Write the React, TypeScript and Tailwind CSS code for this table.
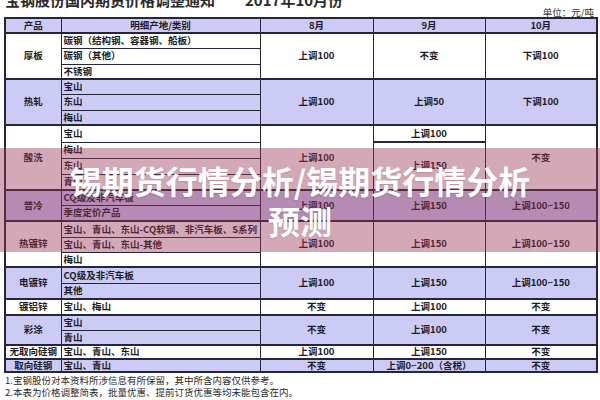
type Cell = { t: string; at: number; span: number; thick?: boolean };
type Group = {
  name: string;
  lav: boolean;
  items: { label: string; h: string }[];
  months: Cell[][];
};

const groups: Group[] = [
  {
    name: "厚板",
    lav: false,
    items: [
      { label: "碳钢（结构钢、容器钢、船板）", h: "h-[15px]" },
      { label: "碳钢（其他）", h: "h-[16px]" },
      { label: "不锈钢", h: "h-[15px]" },
    ],
    months: [
      [{ t: "上调100", at: 0, span: 3 }],
      [{ t: "不变", at: 0, span: 3 }],
      [{ t: "下调100", at: 0, span: 3 }],
    ],
  },
  {
    name: "热轧",
    lav: true,
    items: [
      { label: "宝山", h: "h-[15px]" },
      { label: "东山", h: "h-[16px]" },
      { label: "梅山", h: "h-[15px]" },
    ],
    months: [
      [{ t: "上调100", at: 0, span: 3 }],
      [{ t: "上调50", at: 0, span: 3 }],
      [{ t: "下调100", at: 0, span: 3 }],
    ],
  },
  {
    name: "酸洗",
    lav: false,
    items: [
      { label: "宝山", h: "h-[17px]" },
      { label: "梅山", h: "h-[16px]" },
      { label: "东山", h: "h-[16px]" },
      { label: "青山", h: "h-[16px]" },
    ],
    months: [
      [{ t: "上调100", at: 0, span: 4 }],
      [
        { t: "上调100", at: 0, span: 1, thick: true },
        { t: "上调150", at: 1, span: 3 },
      ],
      [{ t: "不变", at: 0, span: 4 }],
    ],
  },
  {
    name: "普冷",
    lav: true,
    items: [
      { label: "CQ级及非汽车板", h: "h-[15px]" },
      { label: "季度定价产品", h: "h-[16px]" },
    ],
    months: [
      [{ t: "上调100", at: 0, span: 2 }],
      [{ t: "上调150", at: 0, span: 2 }],
      [{ t: "上调100~150", at: 0, span: 2 }],
    ],
  },
  {
    name: "热镀锌",
    lav: false,
    items: [
      { label: "宝山、青山、东山-CQ软钢、非汽车板、S系列", h: "h-[16px]" },
      { label: "宝山、青山、东山-其他", h: "h-[15px]" },
      { label: "梅山", h: "h-[15px]" },
    ],
    months: [
      [{ t: "上调100", at: 0, span: 3 }],
      [{ t: "上调150", at: 0, span: 3 }],
      [{ t: "上调100~150", at: 0, span: 3 }],
    ],
  },
  {
    name: "电镀锌",
    lav: true,
    items: [
      { label: "CQ级及非汽车板", h: "h-[16px]" },
      { label: "其他", h: "h-[16px]" },
    ],
    months: [
      [{ t: "上调100", at: 0, span: 2 }],
      [{ t: "上调150", at: 0, span: 2 }],
      [{ t: "上调100~150", at: 0, span: 2 }],
    ],
  },
  {
    name: "镀铝锌",
    lav: false,
    items: [{ label: "宝山、梅山", h: "h-[16px]" }],
    months: [
      [{ t: "不变", at: 0, span: 1 }],
      [{ t: "上调100", at: 0, span: 1 }],
      [{ t: "不变", at: 0, span: 1 }],
    ],
  },
  {
    name: "彩涂",
    lav: true,
    items: [
      { label: "宝山", h: "h-[15px]" },
      { label: "青山", h: "h-[15px]" },
    ],
    months: [
      [{ t: "不变", at: 0, span: 2 }],
      [{ t: "上调100", at: 0, span: 2 }],
      [{ t: "不变", at: 0, span: 2 }],
    ],
  },
  {
    name: "无取向硅钢",
    lav: false,
    items: [{ label: "宝山、青山、东山", h: "h-[14px]" }],
    months: [
      [{ t: "上调100", at: 0, span: 1 }],
      [{ t: "上调150", at: 0, span: 1 }],
      [{ t: "不变", at: 0, span: 1 }],
    ],
  },
  {
    name: "取向硅钢",
    lav: true,
    items: [{ label: "宝山、青山", h: "h-[13px]" }],
    months: [
      [{ t: "不变", at: 0, span: 1 }],
      [{ t: "上调0~200（含税）", at: 0, span: 1 }],
      [{ t: "不变", at: 0, span: 1 }],
    ],
  },
];

const font = "font-['Noto_Sans_CJK_SC','Noto_Sans',sans-serif]";

function PriceTable() {
  return (
    <table className="w-[592px] table-fixed border-collapse border-2 border-[#26263a] text-[9.5px] font-bold leading-none text-[#1c1c24]">
      <colgroup>
        <col className="w-[56px]" />
        <col className="w-[199px]" />
        <col className="w-[113px]" />
        <col className="w-[112px]" />
        <col className="w-[112px]" />
      </colgroup>
      <thead>
        <tr className="h-[15px] bg-[#cbcbf6]">
          <th className="border border-[#26263a] text-center">产品</th>
          <th className="border border-[#26263a] text-center">明细产地/类别</th>
          <th className="border border-[#26263a] text-center">8月</th>
          <th className="border border-[#26263a] text-center">9月</th>
          <th className="border border-[#26263a] text-center">10月</th>
        </tr>
      </thead>
      <tbody>
        {groups.map((g) =>
          g.items.map((it, i) => (
            <tr key={g.name + i} className={`${it.h} ${g.lav ? "bg-[#cbcbf6]" : "bg-white"}`}>
              {i === 0 && (
                <td
                  rowSpan={g.items.length}
                  className="border border-t-2 border-[#26263a] text-center"
                >
                  {g.name}
                </td>
              )}
              <td
                className={`border border-[#26263a] pl-[2px] text-left whitespace-nowrap ${
                  i === 0 ? "border-t-2" : ""
                }`}
              >
                {it.label}
              </td>
              {g.months.map((m, mi) => {
                const c = m.find((x) => x.at === i);
                if (!c) return null;
                return (
                  <td
                    key={mi}
                    rowSpan={c.span}
                    className={`border border-[#26263a] text-center ${i === 0 ? "border-t-2" : ""} ${
                      c.thick ? "border-b-2" : ""
                    }`}
                  >
                    {c.t}
                  </td>
                );
              })}
            </tr>
          ))
        )}
      </tbody>
    </table>
  );
}

export default function App() {
  return (
    <div className={`relative w-[600px] h-[400px] overflow-hidden bg-white ${font}`}>
      {/* heading, mostly cropped off above the top edge */}
      <div className="flex h-[10px] items-end overflow-hidden px-[5px]">
        <div className="mb-[3px] text-[15px] font-bold leading-none text-[#2a2a2a] whitespace-nowrap">
          宝钢股份国内期货价格调整通知<span className="ml-[30px]">2017年10月份</span>
        </div>
      </div>
      <div className="flex h-[7px] justify-end pr-[6px]">
        <span className="-mt-[2px] text-[9.5px] leading-none text-[#333]">单位：元/吨</span>
      </div>

      <div className="pl-[4px]">
        <PriceTable />
      </div>

      <div className="mt-[1px] pl-[5px] text-[9.5px] leading-[12px] text-[#2a2a2a]">
        <div>1.宝钢股份对本资料所涉信息有所保留，其中所含内容仅供参考。</div>
        <div>2.本表为价格调整简表，批量优惠、提前订货优惠等均未能包含在内。</div>
        <div>3.以上调幅均适用于上海地区交货价格。</div>
      </div>

      {/* translucent caption band */}
      <div className="absolute left-0 top-[148px] flex h-[104px] w-full items-center justify-center bg-[rgba(150,50,85,0.42)]">
        <div className="text-center text-[32px] font-bold leading-[40px] text-white [text-shadow:0_1px_2px_rgba(0,0,0,0.15)]">
          锡期货行情分析/锡期货行情分析
          <br />
          预测
        </div>
      </div>
    </div>
  );
}
